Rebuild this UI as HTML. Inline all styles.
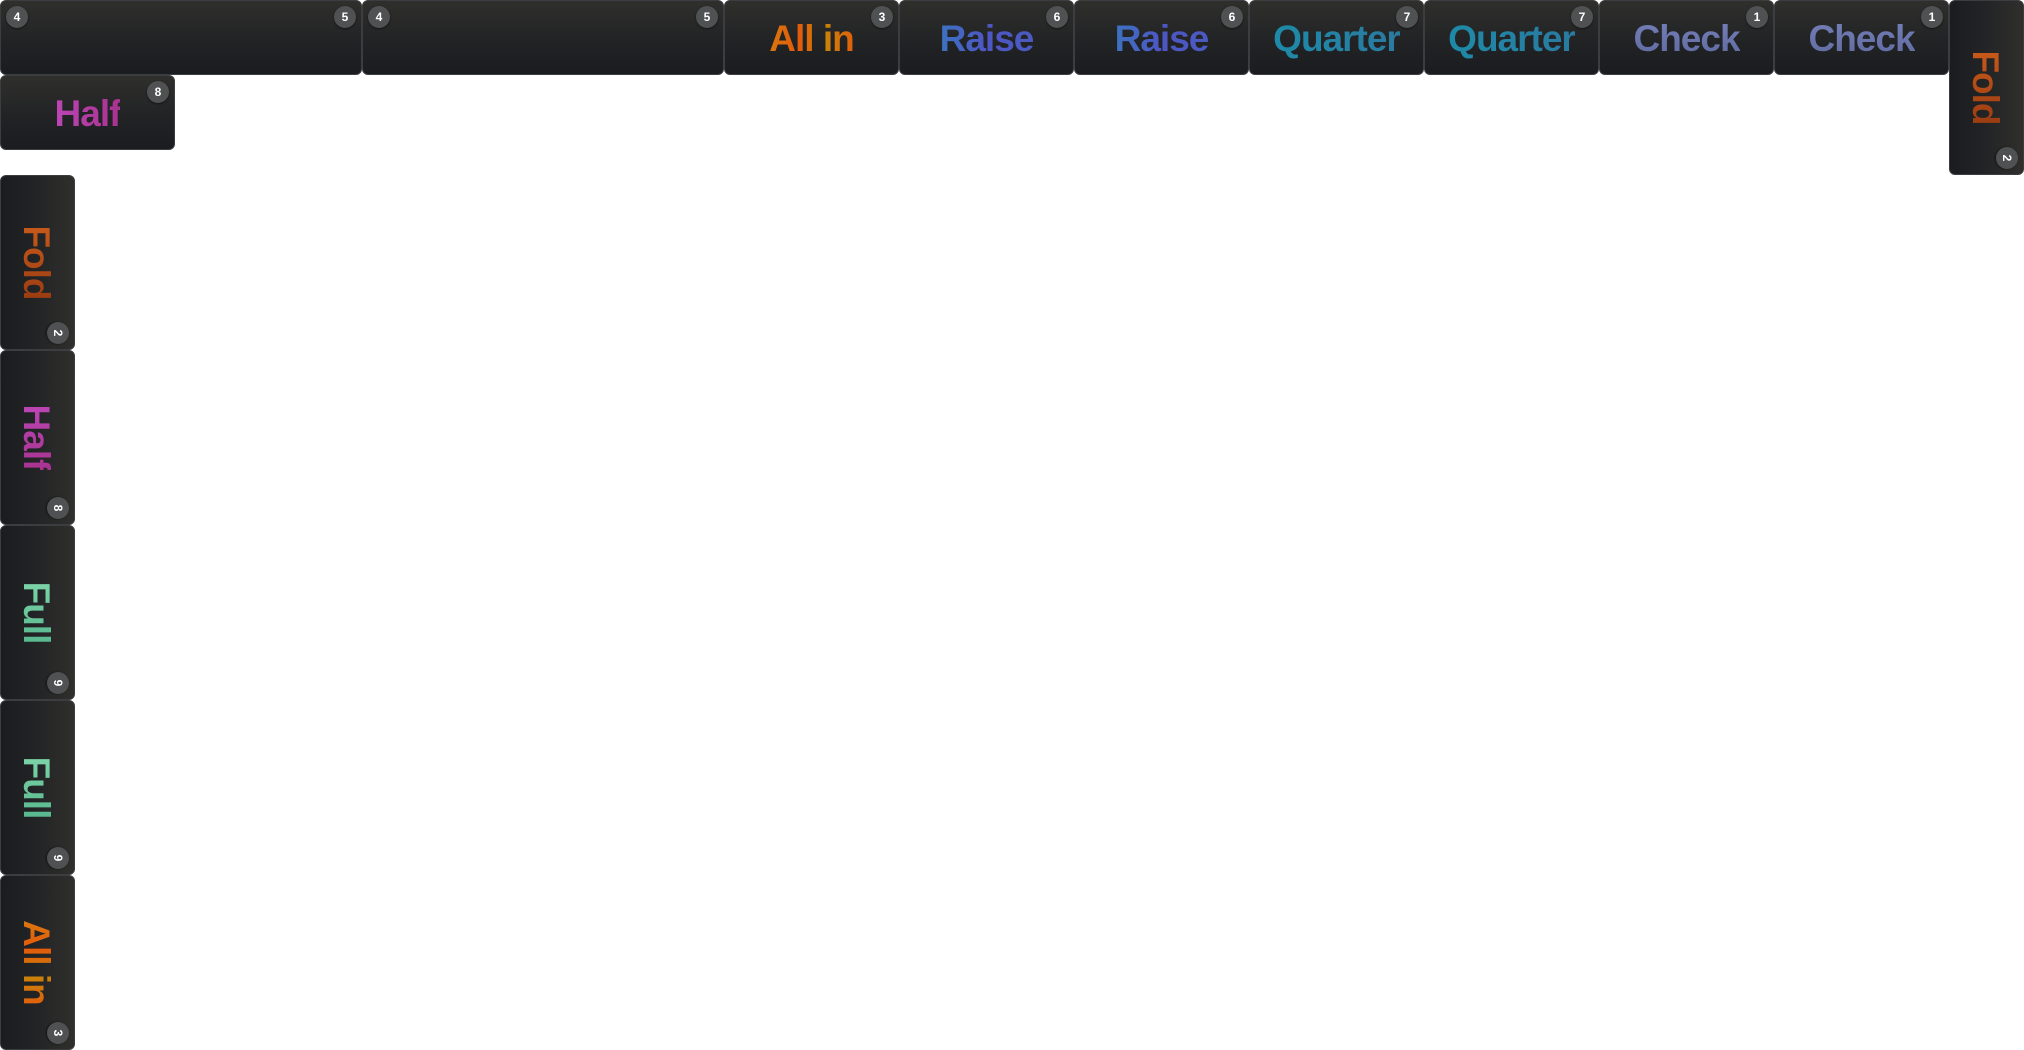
<!DOCTYPE html>
<html><head><meta charset="utf-8"><style>
html,body{margin:0;padding:0;background:#fff;width:2024px;height:1050px;overflow:hidden;position:relative}
.b{position:absolute;box-sizing:border-box;width:175px;height:75px;border:1px solid #3c3d40;border-radius:6px;
background:linear-gradient(180deg,#2f2f2c 0%,#222325 55%,#1a1c1f 100%);
font-family:"Liberation Sans","DejaVu Sans",sans-serif;font-weight:bold;font-size:37px;letter-spacing:-1px;
display:flex;align-items:center;justify-content:center;padding-top:2px}
.b span.t{-webkit-background-clip:text;background-clip:text;color:transparent}
.k{position:absolute;top:5px;right:5px;width:22px;height:22px;border-radius:50%;background:#505152;color:#fff;
font-size:12px;letter-spacing:0;font-weight:bold;display:flex;align-items:center;justify-content:center;box-shadow:0 1px 2px rgba(0,0,0,.5)}
.k.l{left:5px;right:auto}
.w{width:362px}
.r{transform:rotate(90deg)}
.allin{background:linear-gradient(90deg,#d9780e,#e35a0a,#c9820a,#e0600a)}
.raise{background:linear-gradient(90deg,#3c72c0,#4e56c4,#4a5ac0)}
.quarter{background:linear-gradient(90deg,#1e8aa8,#2a7aa0)}
.check{background:linear-gradient(180deg,#7480b8,#5f6aa0)}
.fold{background:linear-gradient(90deg,#c85a1a,#9a3c12)}
.half{background:linear-gradient(90deg,#bb45b4,#a83390)}
.full{background:linear-gradient(90deg,#7cd4a8,#58b88e)}
</style></head><body>
<div class="b w" style="left:0;top:0"><div class="k l">4</div><div class="k">5</div></div>
<div class="b w" style="left:362px;top:0"><div class="k l">4</div><div class="k">5</div></div>
<div class="b" style="left:724px;top:0"><span class="t allin">All in</span><div class="k">3</div></div>
<div class="b" style="left:899px;top:0"><span class="t raise">Raise</span><div class="k">6</div></div>
<div class="b" style="left:1074px;top:0"><span class="t raise">Raise</span><div class="k">6</div></div>
<div class="b" style="left:1249px;top:0"><span class="t quarter">Quarter</span><div class="k">7</div></div>
<div class="b" style="left:1424px;top:0"><span class="t quarter">Quarter</span><div class="k">7</div></div>
<div class="b" style="left:1599px;top:0"><span class="t check">Check</span><div class="k">1</div></div>
<div class="b" style="left:1774px;top:0"><span class="t check">Check</span><div class="k">1</div></div>
<div class="b r" style="left:1899px;top:50px"><span class="t fold">Fold</span><div class="k">2</div></div>
<div class="b" style="left:0;top:75px"><span class="t half">Half</span><div class="k">8</div></div>
<div class="b r" style="left:-50px;top:225px"><span class="t fold">Fold</span><div class="k">2</div></div>
<div class="b r" style="left:-50px;top:400px"><span class="t half">Half</span><div class="k">8</div></div>
<div class="b r" style="left:-50px;top:575px"><span class="t full">Full</span><div class="k">9</div></div>
<div class="b r" style="left:-50px;top:750px"><span class="t full">Full</span><div class="k">9</div></div>
<div class="b r" style="left:-50px;top:925px"><span class="t allin">All in</span><div class="k">3</div></div>
</body></html>
